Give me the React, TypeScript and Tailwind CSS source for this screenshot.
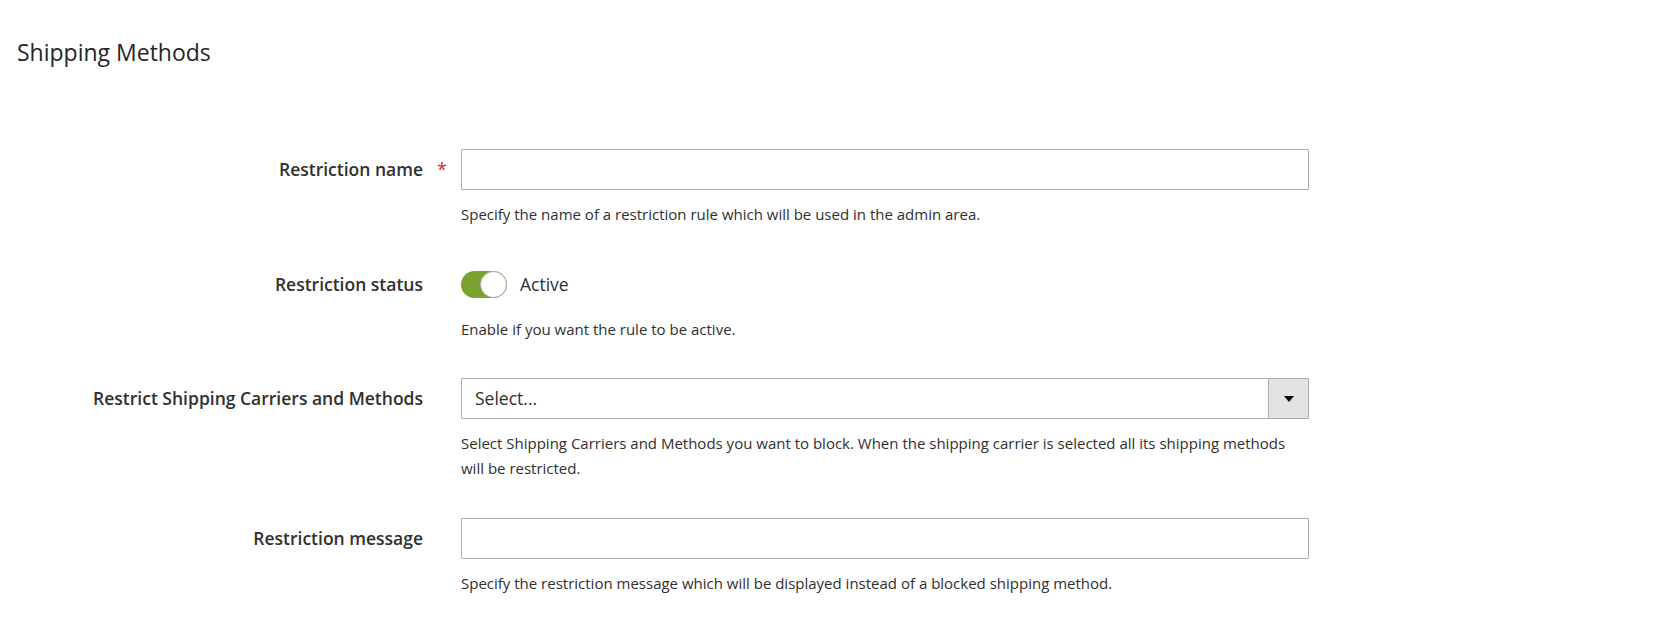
import React from "react";

function Row({
  label,
  required,
  children,
  note,
  className = "",
}: {
  label: string;
  required?: boolean;
  children: React.ReactNode;
  note: React.ReactNode;
  className?: string;
}) {
  return (
    <div className={`flex ${className}`}>
      <div className="w-[423px] h-[41px] flex items-center justify-end text-[17.5px] font-semibold text-[#303030] whitespace-nowrap">
        {label}
      </div>
      <div className="w-[38px] h-[41px] flex items-center pl-[14px] text-[18px] text-[#e22626]">
        {required ? "*" : ""}
      </div>
      <div className="w-[848px]">
        {children}
        <div className="mt-[12px] text-[15px] leading-[25px] text-[#303030]">{note}</div>
      </div>
    </div>
  );
}

export default function App() {
  return (
    <div className="w-[1680px] h-[622px] bg-white font-['Open_Sans',sans-serif] text-[#303030] overflow-hidden">
      <div className="pl-[17px] pt-[38px]">
        <h2 className="text-[23px] font-normal leading-[28px] text-[#262626]">Shipping Methods</h2>
      </div>
      <div className="mt-[83px]">
        <Row
          label="Restriction name"
          required
          note="Specify the name of a restriction rule which will be used in the admin area."
        >
          <div className="h-[41px] border border-[#adadad] bg-white rounded-[1px]" />
        </Row>
        <Row
          className="mt-[37px]"
          label="Restriction status"
          note="Enable if you want the rule to be active."
        >
          <div className="h-[41px] flex items-center">
            <div className="w-[46px] h-[27px] rounded-full bg-[#79a22e] flex items-center justify-end">
              <div className="w-[27px] h-[27px] rounded-full bg-white border border-[#adadad]" />
            </div>
            <span className="ml-[13px] text-[17.5px] text-[#303030]">Active</span>
          </div>
        </Row>
        <Row
          className="mt-[36px]"
          label="Restrict Shipping Carriers and Methods"
          note="Select Shipping Carriers and Methods you want to block. When the shipping carrier is selected all its shipping methods will be restricted."
        >
          <div className="h-[41px] flex border border-[#adadad] bg-white rounded-[1px]">
            <div className="flex-1 flex items-center pl-[13px] text-[17.5px] text-[#303030]">Select...</div>
            <div className="w-[40px] border-l border-[#adadad] bg-[#e3e3e3] flex items-center justify-center">
              <svg width="10" height="6" viewBox="0 0 10 6">
                <path d="M0 0 L10 0 L5 6 Z" fill="#000" />
              </svg>
            </div>
          </div>
        </Row>
        <Row
          className="mt-[37px]"
          label="Restriction message"
          note="Specify the restriction message which will be displayed instead of a blocked shipping method."
        >
          <div className="h-[41px] border border-[#adadad] bg-white rounded-[1px]" />
        </Row>
      </div>
    </div>
  );
}
